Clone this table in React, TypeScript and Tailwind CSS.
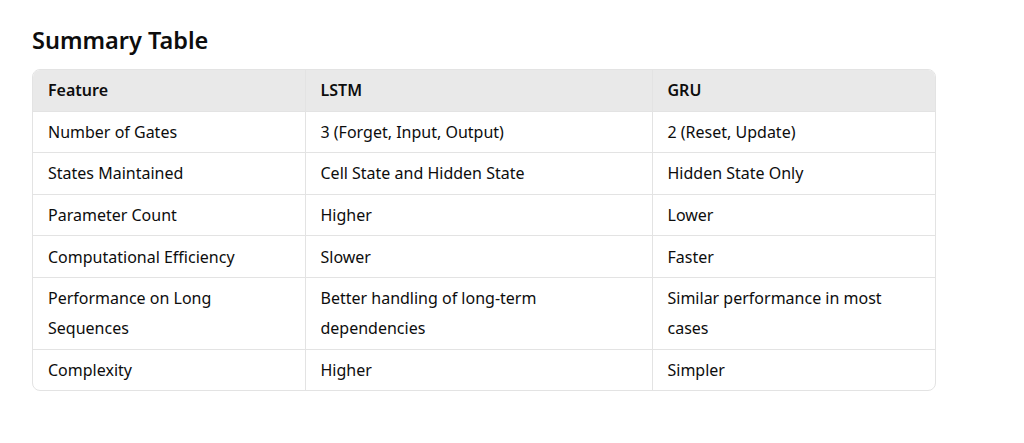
import React from 'react';

const rows: [string, string, string][] = [
  ['Number of Gates', '3 (Forget, Input, Output)', '2 (Reset, Update)'],
  ['States Maintained', 'Cell State and Hidden State', 'Hidden State Only'],
  ['Parameter Count', 'Higher', 'Lower'],
  ['Computational Efficiency', 'Slower', 'Faster'],
  ['Performance on Long Sequences', 'Better handling of long-term dependencies', 'Similar performance in most cases'],
  ['Complexity', 'Higher', 'Simpler'],
];

export default function App() {
  return (
    <div
      className="w-[1024px] h-[443px] bg-white text-[#0d0d0d] pl-[32px] pt-[24px]"
      style={{ fontFamily: '"Noto Sans", "Open Sans", sans-serif' }}
    >
      <h3 className="text-[23.5px] font-semibold leading-[32px] mb-[13px]">Summary Table</h3>
      <div className="w-[904px] rounded-[8px] border border-[#e3e3e3] overflow-hidden">
        <table className="w-full border-collapse text-[16px] leading-[30px]">
          <colgroup>
            <col className="w-[272px]" />
            <col className="w-[347px]" />
            <col />
          </colgroup>
          <thead>
            <tr className="bg-[#e9e9e9]">
              <th className="text-left font-semibold px-[15px] py-[5.3px] border-r border-[#e3e3e3]">Feature</th>
              <th className="text-left font-semibold px-[15px] py-[5.3px] border-r border-[#e3e3e3]">LSTM</th>
              <th className="text-left font-semibold px-[15px] py-[5.3px]">GRU</th>
            </tr>
          </thead>
          <tbody>
            {rows.map((r) => (
              <tr key={r[0]} className="border-t border-[#e3e3e3]">
                <td className="align-top px-[15px] py-[5.3px] border-r border-[#e3e3e3] font-normal">{r[0]}</td>
                <td className="align-top px-[15px] py-[5.3px] border-r border-[#e3e3e3]">{r[1]}</td>
                <td className="align-top px-[15px] py-[5.3px]">{r[2]}</td>
              </tr>
            ))}
          </tbody>
        </table>
      </div>
    </div>
  );
}
